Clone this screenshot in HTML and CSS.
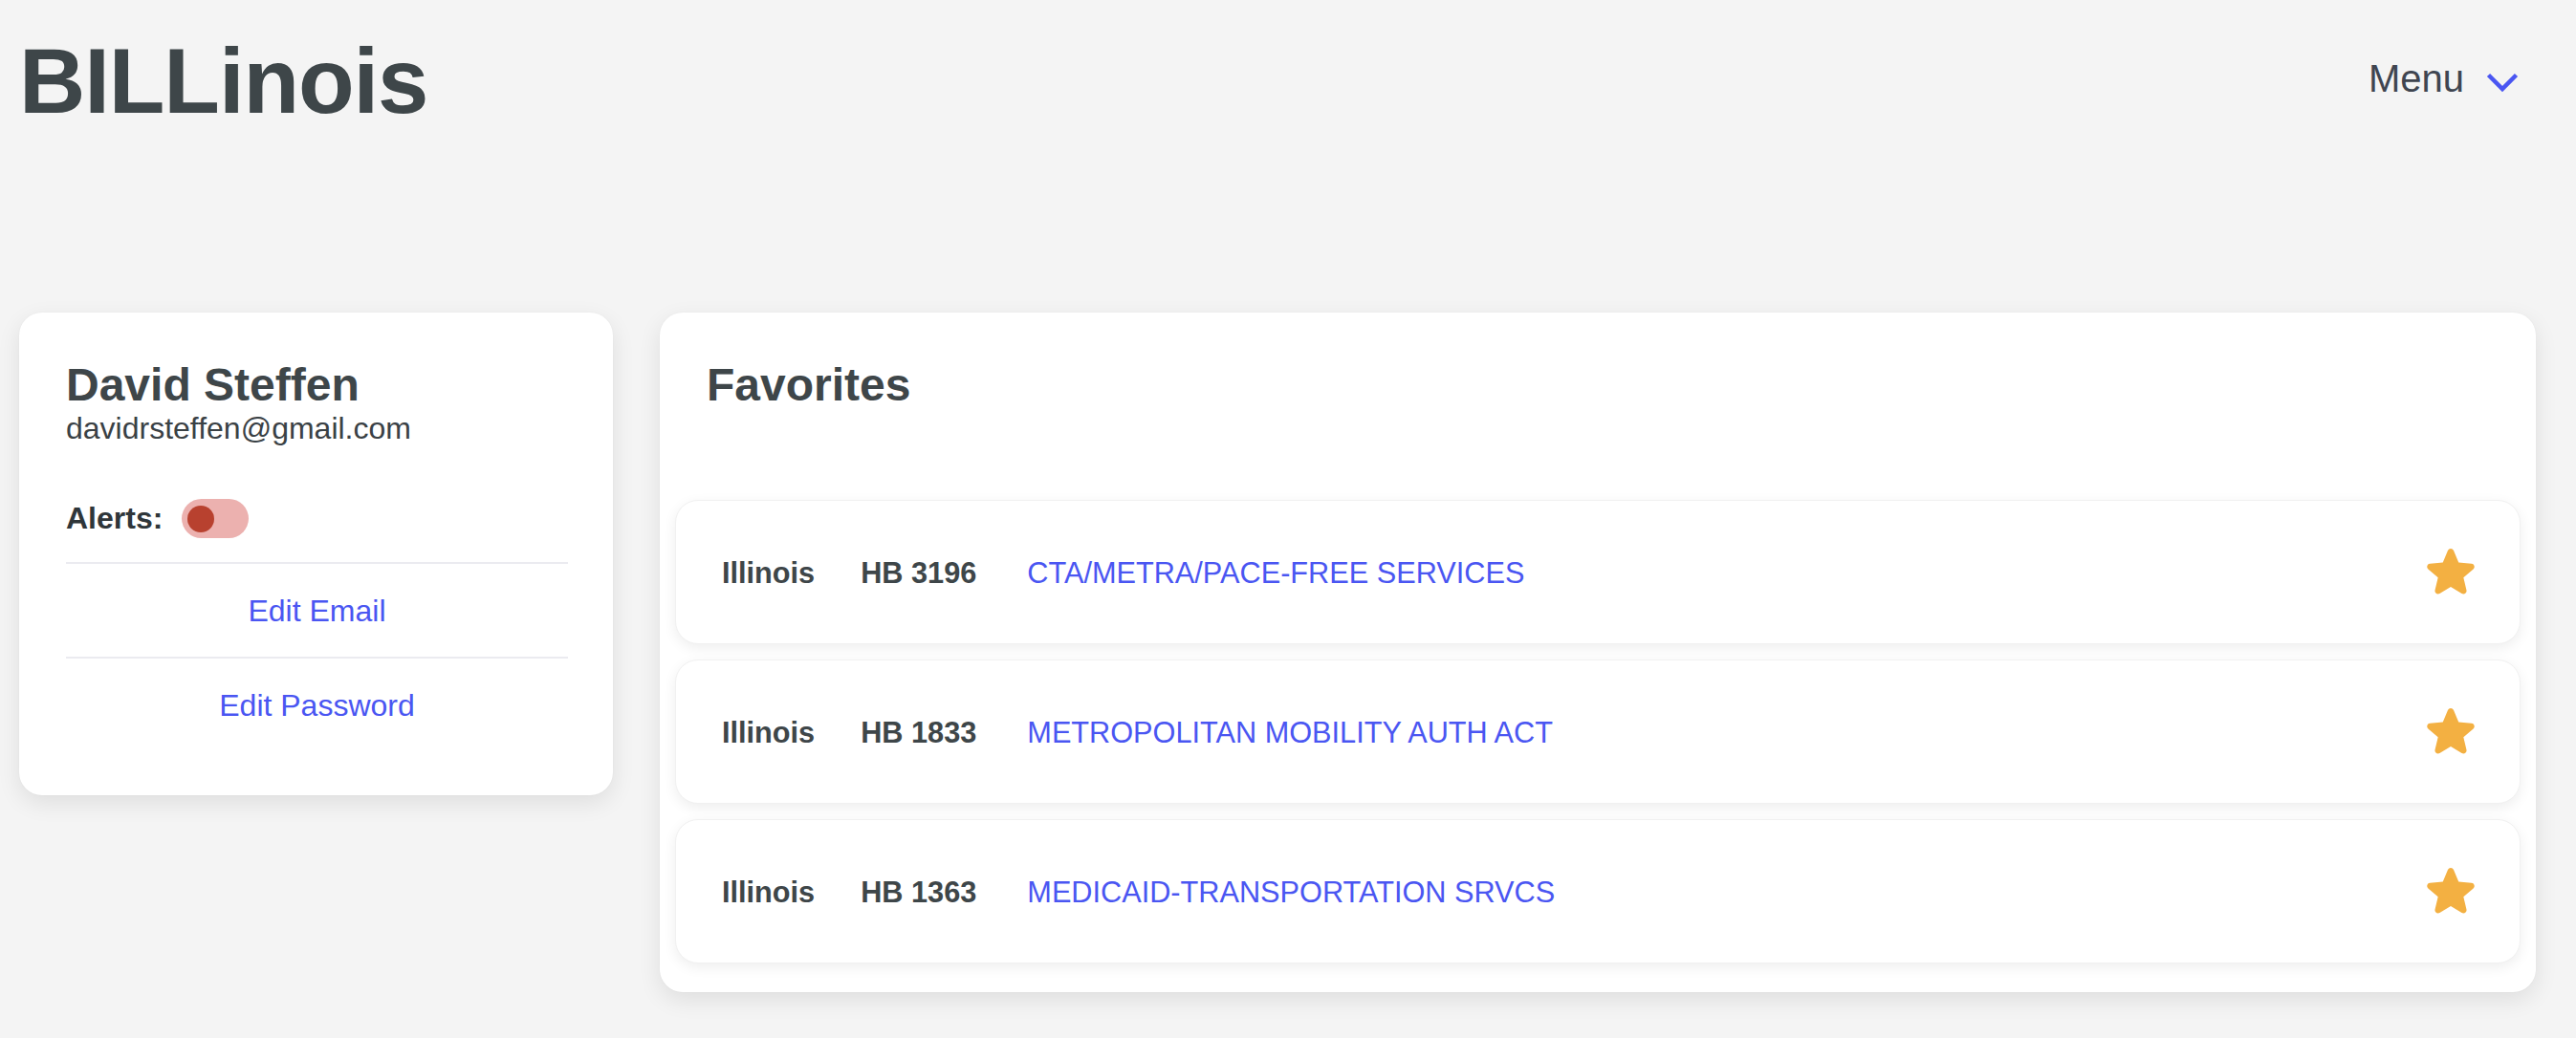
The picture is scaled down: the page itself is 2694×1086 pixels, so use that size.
FILE: index.html
```html
<!DOCTYPE html>
<html lang="en">
<head>
<meta charset="utf-8">
<title>BILLinois</title>
<link rel="stylesheet" href="styles.css">
</head>
<body>
<header class="site-header">
  <h1 class="logo">BILLinois</h1>
  <button class="menu-btn" type="button">
    <span class="menu-label">Menu</span>
    <svg class="chevron" width="36" height="23" viewBox="0 0 36 23" aria-hidden="true">
      <polyline points="3.5,3.5 18,18 32.5,3.5" fill="none" stroke="#4a56f2" stroke-width="4.5"/>
    </svg>
  </button>
</header>

<main class="layout">
  <section class="card profile">
    <h2 class="profile-name">David Steffen</h2>
    <div class="profile-email">davidrsteffen@gmail.com</div>
    <div class="alerts-row">
      <span class="alerts-label">Alerts:</span>
      <span class="toggle"><span class="toggle-knob"></span></span>
    </div>
    <div class="divider"></div>
    <a class="profile-link" href="#">Edit Email</a>
    <div class="divider"></div>
    <a class="profile-link" href="#">Edit Password</a>
  </section>

  <section class="card favorites">
    <h2 class="favorites-title">Favorites</h2>
    <ul class="fav-list">
      <li class="fav-row">
        <span class="fav-state">Illinois</span>
        <span class="fav-bill">HB 3196</span>
        <a class="fav-name" href="#">CTA/METRA/PACE-FREE SERVICES</a>
        <svg class="star" width="60" height="60" viewBox="0 0 24 24" aria-hidden="true"><path fill="#f3b042" d="M10.788 3.21c.448-1.077 1.976-1.077 2.424 0l2.082 5.006 5.404.434c1.164.093 1.636 1.545.749 2.305l-4.117 3.527 1.257 5.273c.271 1.136-.964 2.033-1.96 1.425L12 18.354 7.373 21.18c-.996.608-2.231-.29-1.960-1.425l1.257-5.273-4.117-3.527c-.887-.76-.415-2.212.749-2.305l5.404-.434 2.082-5.005Z"/></svg>
      </li>
      <li class="fav-row">
        <span class="fav-state">Illinois</span>
        <span class="fav-bill">HB 1833</span>
        <a class="fav-name" href="#">METROPOLITAN MOBILITY AUTH ACT</a>
        <svg class="star" width="60" height="60" viewBox="0 0 24 24" aria-hidden="true"><path fill="#f3b042" d="M10.788 3.21c.448-1.077 1.976-1.077 2.424 0l2.082 5.006 5.404.434c1.164.093 1.636 1.545.749 2.305l-4.117 3.527 1.257 5.273c.271 1.136-.964 2.033-1.96 1.425L12 18.354 7.373 21.18c-.996.608-2.231-.29-1.960-1.425l1.257-5.273-4.117-3.527c-.887-.76-.415-2.212.749-2.305l5.404-.434 2.082-5.005Z"/></svg>
      </li>
      <li class="fav-row">
        <span class="fav-state">Illinois</span>
        <span class="fav-bill">HB 1363</span>
        <a class="fav-name" href="#">MEDICAID-TRANSPORTATION SRVCS</a>
        <svg class="star" width="60" height="60" viewBox="0 0 24 24" aria-hidden="true"><path fill="#f3b042" d="M10.788 3.21c.448-1.077 1.976-1.077 2.424 0l2.082 5.006 5.404.434c1.164.093 1.636 1.545.749 2.305l-4.117 3.527 1.257 5.273c.271 1.136-.964 2.033-1.96 1.425L12 18.354 7.373 21.18c-.996.608-2.231-.29-1.960-1.425l1.257-5.273-4.117-3.527c-.887-.76-.415-2.212.749-2.305l5.404-.434 2.082-5.005Z"/></svg>
      </li>
    </ul>
  </section>
</main>
</body>
</html>
```

FILE: styles.css
```css
* {
  box-sizing: border-box;
}

html, body {
  margin: 0;
  padding: 0;
}

body {
  background: #f4f4f4;
  font-family: "Liberation Sans", Arial, Helvetica, sans-serif;
  color: #3e4649;
  font-size: 32px;
  width: 2694px;
  min-height: 1086px;
  overflow: hidden;
}

.site-header {
  display: flex;
  justify-content: space-between;
  align-items: center;
  padding: 30px 59px 0 20px;
}

.logo {
  margin: 0;
  font-size: 96px;
  font-weight: 700;
  letter-spacing: -1.1px;
  line-height: normal;
  color: #3e4649;
}

.menu-btn {
  display: flex;
  align-items: center;
  gap: 22px;
  border: none;
  background: transparent;
  padding: 0 0 6px 0;
  font-family: inherit;
  cursor: pointer;
}

.menu-label {
  font-size: 40px;
  color: #3f4550;
}

.chevron {
  display: block;
  margin-top: 8px;
}

.layout {
  display: flex;
  align-items: flex-start;
  gap: 49px;
  padding: 0 42px 0 20px;
  margin-top: 187px;
}

.card {
  background: #ffffff;
  border-radius: 24px;
  box-shadow: 0 8px 24px rgba(0, 0, 0, 0.09), 0 0 2px rgba(0, 0, 0, 0.04);
}

.profile {
  flex: 0 0 621px;
  padding: 48px 47px 46px 49px;
  display: flex;
  flex-direction: column;
}

.profile-name {
  margin: 0;
  font-size: 48px;
  font-weight: 700;
  line-height: 55px;
  color: #3e4649;
}

.profile-email {
  font-size: 32px;
  line-height: 37px;
  color: #3a4145;
  margin-bottom: 55px;
}

.alerts-row {
  display: flex;
  align-items: center;
  gap: 20px;
  height: 41px;
}

.alerts-label {
  font-weight: 700;
  font-size: 32px;
  color: #2f363a;
}

.toggle {
  display: flex;
  align-items: center;
  width: 70px;
  height: 41px;
  padding: 0 6px;
  border-radius: 21px;
  background: #ecb1af;
}

.toggle-knob {
  width: 28px;
  height: 28px;
  border-radius: 50%;
  background: #b8412f;
}

.divider {
  height: 2px;
  background: #ebebf0;
}

.alerts-row + .divider {
  margin-top: 25px;
}

.profile-link {
  display: block;
  text-align: center;
  padding: 31px 0 29px;
  line-height: 37px;
  font-size: 32px;
  color: #4a56f2;
  text-decoration: none;
}

.favorites {
  flex: 1 1 auto;
  padding: 48px 16px 30px 16px;
}

.favorites-title {
  margin: 0 0 93px 0;
  padding-left: 33px;
  font-size: 48px;
  font-weight: 700;
  line-height: 55px;
  color: #3e4649;
}

.fav-list {
  list-style: none;
  margin: 0;
  padding: 0;
  display: flex;
  flex-direction: column;
  gap: 16px;
}

.fav-row {
  display: flex;
  align-items: center;
  gap: 48px;
  height: 151px;
  padding: 3px 42px 0 48px;
  background: #ffffff;
  border-radius: 24px;
  border: 1px solid #f1f1f1;
  box-shadow: 0 4px 14px rgba(0, 0, 0, 0.07);
  font-size: 30.7px;
}

.fav-state,
.fav-bill {
  font-weight: 700;
  color: #3e4649;
}

.fav-bill {
  margin-right: 5px;
}

.fav-name {
  color: #4a56f2;
  text-decoration: none;
}

.star {
  display: block;
  margin-left: auto;
  margin-top: -5px;
}
```
